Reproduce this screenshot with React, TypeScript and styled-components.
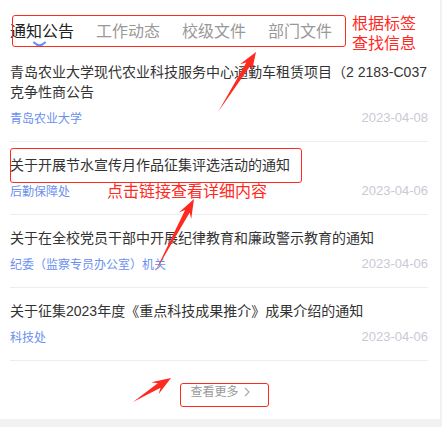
import React from 'react';
import styled, { createGlobalStyle } from 'styled-components';

const red = '#ff2a1f';
const blue = '#6a8ff0';

const GlobalStyle = createGlobalStyle`
  body {
    margin: 0;
    background: #f2f2f2;
    font-family: "Liberation Sans", "Noto Sans CJK SC", sans-serif;
  }
`;

const Panel = styled.div`
  position: relative;
  width: 440px;
  height: 419px;
  background: #fff;
`;

const Tabs = styled.div`
  display: flex;
  gap: 22px;
  height: 49px;
  box-sizing: border-box;
  padding: 21px 0 0 10px;
`;

const Tab = styled.div<{ $active?: boolean }>`
  position: relative;
  font-size: 16px;
  line-height: 22px;
  color: ${p => (p.$active ? '#222' : '#999')};
  cursor: pointer;
`;

const Indicator = styled.svg`
  position: absolute;
  left: 23px;
  top: 20px;
`;

const List = styled.div`
  margin: 0 12px 0 10px;
`;

const Item = styled.div`
  padding: 13px 0 15px;
  border-bottom: 1px solid #eee;
  cursor: pointer;
`;

const Title = styled.div`
  font-size: 14px;
  line-height: 20px;
  color: #333;
`;

const Meta = styled.div`
  display: flex;
  justify-content: space-between;
  align-items: center;
  margin-top: 6px;
  height: 18px;
`;

const Source = styled.span`
  font-size: 12px;
  color: ${blue};
`;

const DateText = styled.span`
  font-size: 13px;
  color: #c8cad4;
`;

const MoreRow = styled.div`
  display: flex;
  justify-content: center;
  padding-top: 22px;
`;

const More = styled.a`
  display: inline-flex;
  align-items: center;
  gap: 5px;
  font-size: 12px;
  line-height: 18px;
  color: #999;
  cursor: pointer;
`;

// annotation layer drawn over the page
const Overlay = styled.div`
  position: absolute;
  inset: 0;
  pointer-events: none;
`;

const Box = styled.div<{ $x: number; $y: number; $w: number; $h: number }>`
  position: absolute;
  left: ${p => p.$x}px;
  top: ${p => p.$y}px;
  width: ${p => p.$w}px;
  height: ${p => p.$h}px;
  box-sizing: border-box;
  border: 1.5px solid ${red};
  border-radius: 3px;
`;

const Note = styled.div<{ $x: number; $y: number }>`
  position: absolute;
  left: ${p => p.$x}px;
  top: ${p => p.$y}px;
  font-size: 16px;
  line-height: 20px;
  color: ${red};
  white-space: nowrap;
`;

const ArrowLayer = styled.svg`
  position: absolute;
  left: 0;
  top: 0;
`;

const news = [
  {
    title: '青岛农业大学现代农业科技服务中心通勤车租赁项目（2 2183-C037克争性商公告',
    source: '青岛农业大学',
    date: '2023-04-08'
  },
  { title: '关于开展节水宣传月作品征集评选活动的通知', source: '后勤保障处', date: '2023-04-06' },
  {
    title: '关于在全校党员干部中开展纪律教育和廉政警示教育的通知',
    source: '纪委（监察专员办公室）机关',
    date: '2023-04-06'
  },
  { title: '关于征集2023年度《重点科技成果推介》成果介绍的通知', source: '科技处', date: '2023-04-06' }
];

const tabs = ['通知公告', '工作动态', '校级文件', '部门文件'];

const arrowPoints = (x1: number, y1: number, x2: number, y2: number) => {
  const dx = x2 - x1;
  const dy = y2 - y1;
  const len = Math.hypot(dx, dy);
  const ux = dx / len;
  const uy = dy / len;
  const nx = -uy;
  const ny = ux;
  const at = (d: number, w: number) => `${x2 - ux * d + nx * w},${y2 - uy * d + ny * w}`;
  return [`${x1},${y1}`, at(14, 2.6), at(19, 7), `${x2},${y2}`, at(19, -7), at(14, -2.6)].join(' ');
};

const arrows = [
  [218, 112, 256, 52],
  [155, 272, 194, 199],
  [133, 402, 171, 378]
];

const App = () => (
  <Panel>
    <GlobalStyle />
    <Tabs>
      {tabs.map((t, i) => (
        <Tab key={t} $active={i === 0}>
          {t}
          {i === 0 && (
            <Indicator width="13" height="7" viewBox="0 0 13 7">
              <path d="M1 1.5 Q6.5 7 12 1.5" fill="none" stroke={blue} strokeWidth="2" strokeLinecap="round" />
            </Indicator>
          )}
        </Tab>
      ))}
    </Tabs>
    <List>
      {news.map(n => (
        <Item key={n.title}>
          <Title>{n.title}</Title>
          <Meta>
            <Source>{n.source}</Source>
            <DateText>{n.date}</DateText>
          </Meta>
        </Item>
      ))}
    </List>
    <MoreRow>
      <More>
        查看更多
        <svg width="6" height="10" viewBox="0 0 6 10">
          <path d="M1 1 L5 5 L1 9" fill="none" stroke="#aaa" strokeWidth="1.2" />
        </svg>
      </More>
    </MoreRow>

    <Overlay>
      <Box $x={12} $y={15} $w={334} $h={32} />
      <Note $x={352} $y={14}>根据标签<br />查找信息</Note>
      <Box $x={10} $y={148} $w={292} $h={35} />
      <Note $x={107} $y={182}>点击链接查看详细内容</Note>
      <Box $x={180} $y={383} $w={89} $h={24} />
      <ArrowLayer width="440" height="419">
        {arrows.map(([a, b, c, d]) => (
          <polygon key={`${a}-${b}`} points={arrowPoints(a, b, c, d)} fill={red} />
        ))}
      </ArrowLayer>
    </Overlay>
  </Panel>
);

export default App;
